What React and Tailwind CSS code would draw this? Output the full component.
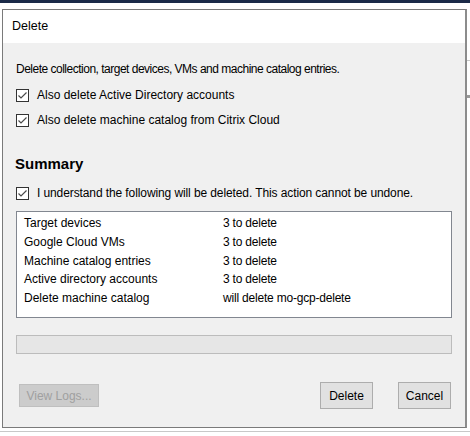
import React from 'react';

const rows = [
  ['Target devices', '3 to delete'],
  ['Google Cloud VMs', '3 to delete'],
  ['Machine catalog entries', '3 to delete'],
  ['Active directory accounts', '3 to delete'],
  ['Delete machine catalog', 'will delete mo-gcp-delete'],
];

function CheckBox() {
  return (
    <span className="w-[13px] h-[13px] shrink-0 bg-white border border-[#333333] flex items-center justify-center">
      <svg width="11" height="11" viewBox="0 0 11 11">
        <path d="M1.5 5.5 L4 8 L9.5 2.5" fill="none" stroke="#4a4a4a" strokeWidth="1.2" />
      </svg>
    </span>
  );
}

function Check({ label, className = '' }) {
  return (
    <label className={`flex items-center gap-[8px] h-[16px] ${className}`}>
      <CheckBox />
      <span>{label}</span>
    </label>
  );
}

export default function App() {
  return (
    <div
      className="w-[470px] h-[436px] bg-white overflow-hidden relative text-[12px] text-black"
      style={{ fontFamily: '"Liberation Sans", Arial, sans-serif' }}
    >
      {/* backdrop window edges */}
      <div className="h-[3px] bg-[#1b2a48]" />
      <div className="absolute right-0 top-[60px] w-[5px] h-px bg-[#c8c8c8]" />
      <div className="absolute right-0 top-[95px] w-[5px] h-[3px] bg-[#9a9a9a]" />
      <div className="absolute left-0 right-0 top-[431px] h-px bg-[#c8c8c8]" />

      {/* dialog */}
      <div className="relative ml-[2px] mt-[6px] w-[465px] h-[419px] flex flex-col border-l border-t border-b border-[#7a7a7a] border-r-2 border-r-[#8c8c8c] bg-[#f0f0f0]">
        <div className="h-[33px] bg-white flex items-center pl-[9px] text-[12.5px]">Delete</div>

        <div className="flex-1 flex flex-col pl-[13px] pr-[13px]">
          <div className="mt-[18px] h-[16px] leading-[16px] tracking-[-0.5px]">
            Delete collection, target devices, VMs and machine catalog entries.
          </div>
          <Check className="mt-[10px]" label="Also delete Active Directory accounts" />
          <Check className="mt-[9px]" label="Also delete machine catalog from Citrix Cloud" />

          <div className="mt-[26px] h-[20px] leading-[20px] text-[15px] font-bold -ml-[1px]">Summary</div>
          <Check
            className="mt-[11px] tracking-[-0.1px]"
            label="I understand the following will be deleted. This action cannot be undone."
          />

          <div className="mt-[10px] w-[436px] h-[107px] bg-white border border-[#828790] pt-[2px] pl-[7px]">
            {rows.map(([k, v]) => (
              <div key={k} className="flex h-[18.75px] leading-[18.75px]">
                <span className="w-[199px]">{k}</span>
                <span className="tracking-[-0.2px]">{v}</span>
              </div>
            ))}
          </div>

          <div className="mt-[17px] w-[436px] h-[19px] bg-[#e6e6e6] border border-[#bcbcbc]" />

          <div className="mt-[28px] flex items-start">
            <button className="mt-[2px] ml-[3px] w-[80px] h-[23px] bg-[#cccccc] border border-[#bfbfbf] text-[#a0a0a0] text-[12px]">
              View Logs...
            </button>
            <div className="flex-1" />
            <button className="w-[53px] h-[27px] bg-[#e1e1e1] border border-[#adadad] text-[12px]">Delete</button>
            <button className="ml-[25px] mr-[1px] w-[53px] h-[27px] bg-[#e1e1e1] border border-[#adadad] text-[12px]">Cancel</button>
          </div>
        </div>
      </div>
    </div>
  );
}
